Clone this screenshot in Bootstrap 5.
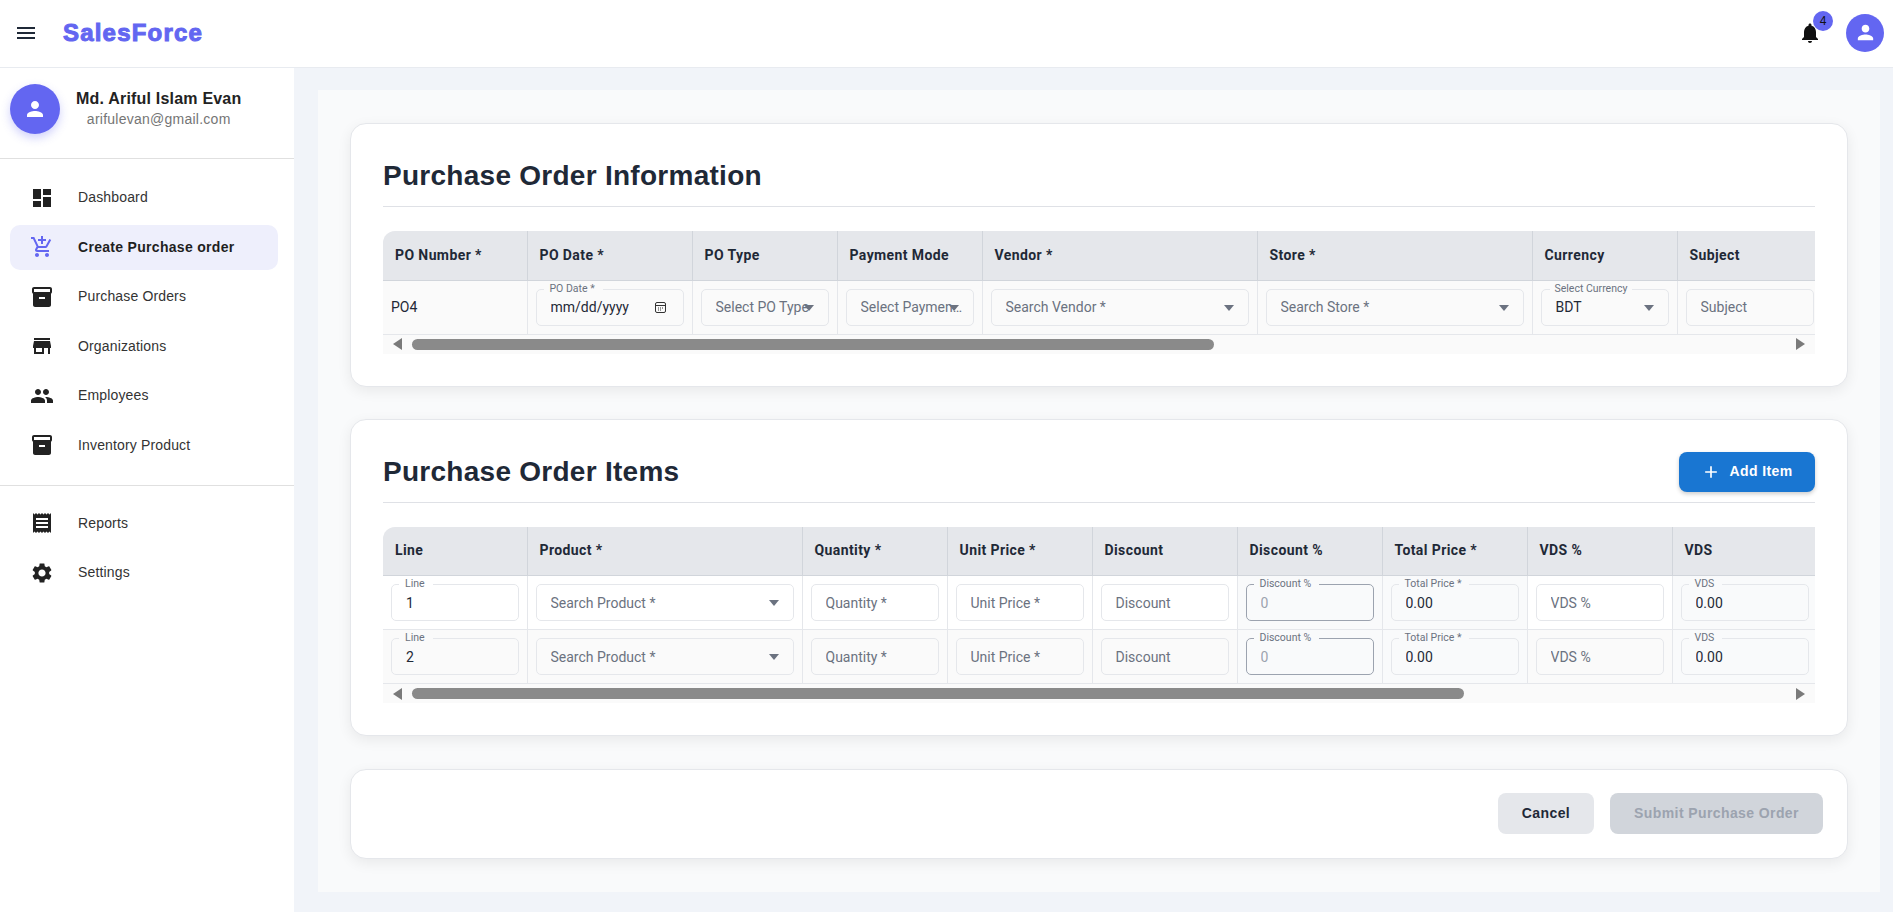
<!DOCTYPE html>
<html lang="en">
<head>
    <meta charset="UTF-8">
    <meta name="viewport" content="width=device-width, initial-scale=1.0">
    <title>SalesForce - Create Purchase Order</title>
    <link href="https://cdn.jsdelivr.net/npm/bootstrap@5.3.0/dist/css/bootstrap.min.css" rel="stylesheet">
    <style>
        html, body { height: 100%; }
        body { overflow: hidden; background: #f1f4f9; font-family: "Liberation Sans", Arial, sans-serif; color: #1f2937; }

        /* top bar */
        .topbar { height: 68px; padding: 0 9px 2px 14px; background: #fff; border-bottom: 1px solid #e8ebf0; }
        .brand-text { margin-left: 25px; padding: 0; font-size: 24px; font-weight: 700; letter-spacing: 1.2px; color: #6366f1; -webkit-text-stroke: 1px #6366f1; }
        .ico { display: block; flex: none; width: 24px; height: 24px; fill: currentColor; }
        .bell-wrap { width: 24px; height: 24px; color: #111; }
        .bell-count { top: -10px; left: 15px; width: 20px; height: 20px; padding: 0; font-size: 12px; line-height: 20px; font-weight: 400; background: #6366f1; color: #111; }
        .user-dot { width: 38px; height: 38px; margin-left: 24px; background: #6366f1; color: #fff; }
        .user-dot .ico { width: 23px; height: 23px; }

        /* sidebar */
        .app-body { height: 844px; }
        .side { width: 294px; flex: none; background: #fff; }
        .profile { height: 91px; padding: 16px 10px 0; border-bottom: 1px solid #e0e0e0; }
        .profile-pic { width: 50px; height: 50px; background: #6366f1; color: #fff; box-shadow: 0 4px 10px rgba(99, 102, 241, .3); }
        .profile-name { margin-top: 1px; font-size: 16px; line-height: 20px; font-weight: 700; letter-spacing: .2px; color: #222; }
        .profile-mail { font-size: 14px; line-height: 20px; letter-spacing: .25px; color: #757575; }
        .side-group { padding: 16px 16px 17px 10px; gap: 4.5px; }
        .side-group + .side-group { padding-top: 15px; border-top: 1px solid #e0e0e0; }
        .side-link { height: 45px; padding: 0 0 0 20px; border-radius: 10px; font-size: 14px; letter-spacing: .15px; color: #333; }
        .side-link:hover { color: #333; }
        .side-link .ico { margin-right: 24px; color: #222; }
        .side-link.active { background: #eeeffc; color: #1f1f1f; font-weight: 700; letter-spacing: .3px; }
        .side-link.active .ico { color: #6366f1; }

        /* content */
        .content-area { min-width: 0; padding: 22px 13px 20px 24px; }
        .panel { height: 802px; padding: 33px 32px 0; background: #f9fafb; }
        .box { margin-bottom: 32px; padding: 32px; background: #fff; border: 1px solid #e5e7eb; border-radius: 16px; box-shadow: 0 4px 14px rgba(0, 0, 0, .07); }
        .box-head { height: 51px; margin-bottom: 24px; padding-bottom: 10px; border-bottom: 1px solid #dfe1e6; }
        .box-title { margin: 0; font-size: 28px; font-weight: 700; letter-spacing: .27px; color: #1f2937; }
        .btn-add { width: 136px; height: 40px; padding: 0; border: 0; border-radius: 8px; background: #1976d2; color: #fff; font-size: 14px; font-weight: 700; letter-spacing: .4px; box-shadow: 0 2px 4px rgba(0, 0, 0, .2); }
        .btn-add:hover { background: #1976d2; color: #fff; }
        .btn-add .ico { width: 20px; height: 20px; margin-right: 8px; }
        .box-foot { height: 90px; margin: 33px 0 0; padding: 24px 24px 25px; }
        .btn-soft { height: 41px; padding: 0; border: 0; border-radius: 8px; font-size: 14px; font-weight: 700; letter-spacing: .4px; }
        .btn-cancel { width: 96px; margin-right: 16px; background: #e5e7eb; color: #1f2937; }
        .btn-cancel:hover { background: #e5e7eb; color: #1f2937; }
        .btn-submit:disabled { width: 213px; background: #d1d5db; color: #9ca3af; opacity: 1; }

        /* tables */
        .grid-clip { overflow: hidden; border-radius: 12px 0 0 0; background: #fafafa; }
        .grid { margin: 0; table-layout: fixed; border-collapse: collapse; font-family: Roboto, sans-serif; font-size: 14px; }
        .grid-po { width: 1439px; }
        .grid-items { width: 1434px; }
        .w-a { width: 144px; } .w-b { width: 165px; } .w-c { width: 145px; } .w-d { width: 275px; }
        .grid > :not(caption) > * > * { padding: 8px; vertical-align: middle; border-width: 0 1px 1px 0; border-style: solid; border-color: #e5e7eb; background: transparent; box-shadow: none; color: #1f2937; }
        .grid > thead > tr > th { height: 49px; padding: 0 12px; background: #e5e7eb; border-color: #d1d5db; font-weight: 700; font-size: 14px; letter-spacing: .4px; white-space: nowrap; }
        .grid > tbody > tr > td { height: 54px; }
        .row-plain { --cell: #fff; }
        .row-alt { --cell: #fafafa; }
        .grid > tbody > tr.row-plain > td { background: #fff; }
        .grid > tbody > tr.row-alt > td { background: #fafafa; }
        .grid > tbody > tr > td.cell-muted { background: #f9fafb; --cell: #f9fafb; }
        .fld { height: 37px; }
        .fld .form-control { height: 37px; padding: 0 10px 0 14px; border: 1px solid #e5e7eb; border-radius: 5px; background: transparent; box-shadow: none; font-size: 14px; color: #1f2937; text-overflow: ellipsis; }
        .fld .form-control::placeholder { color: #6b7280; opacity: 1; }
        .fld .form-control:disabled { background: #f9fafb; }
        .fld .field-strong { border-color: #9ca3af; }
        .fld .field-strong::placeholder { color: #9ca3af; }
        .fld-label { top: -6px; left: 8px; padding: 0 8px 0 6px; font-size: 10.5px; line-height: 12px; background: var(--cell); color: #6b7280; white-space: nowrap; }
        .fld-label-flat { left: 9px; padding: 0 5px; }
        .caret-mark { top: 16px; right: 15px; width: 10px; height: 6px; fill: #6b7280; }
        .date-mark { top: 12px; right: 17px; width: 13px; height: 13px; fill: none; stroke: #333; pointer-events: none; }
        .fld input[type="date"]::-webkit-calendar-picker-indicator { opacity: 0; }
        .fake-scroll { height: 19px; padding: 0 10px; gap: 10px; background: #fafafa; }
        .fake-arrow { width: 9px; height: 12px; fill: #7a7a7a; flex: none; }
        .fake-track { height: 11px; }
        .fake-thumb { height: 11px; border-radius: 6px; background: #8a8a8a; }
    </style>
</head>
<body>
    <nav class="navbar topbar flex-nowrap justify-content-start">
        <svg class="ico" viewBox="0 0 24 24"><path d="M3 18h18v-2H3v2zm0-5h18v-2H3v2zm0-7v2h18V6H3z"/></svg>
        <span class="navbar-brand brand-text">SalesForce</span>
        <div class="ms-auto d-flex align-items-center">
            <div class="bell-wrap position-relative">
                <svg class="ico" viewBox="0 0 24 24"><path d="M12 22c1.1 0 2-.9 2-2h-4c0 1.1.89 2 2 2zm6-6v-5c0-3.07-1.64-5.64-4.5-6.32V4c0-.83-.67-1.5-1.5-1.5s-1.5.67-1.5 1.5v.68C7.63 5.36 6 7.92 6 11v5l-2 2v1h16v-1l-2-2z"/></svg>
                <span class="badge rounded-circle position-absolute bell-count">4</span>
            </div>
            <div class="user-dot rounded-circle d-flex align-items-center justify-content-center">
                <svg class="ico" viewBox="0 0 24 24"><path d="M12 12c2.21 0 4-1.79 4-4s-1.79-4-4-4-4 1.79-4 4 1.79 4 4 4zm0 2c-2.67 0-8 1.34-8 4v2h16v-2c0-2.66-5.33-4-8-4z"/></svg>
            </div>
        </div>
    </nav>

    <div class="d-flex app-body">
        <aside class="side">
            <div class="profile d-flex align-items-start gap-3">
                <div class="profile-pic rounded-circle d-flex align-items-center justify-content-center flex-none">
                    <svg class="ico" viewBox="0 0 24 24"><path d="M12 12c2.21 0 4-1.79 4-4s-1.79-4-4-4-4 1.79-4 4 1.79 4 4 4zm0 2c-2.67 0-8 1.34-8 4v2h16v-2c0-2.66-5.33-4-8-4z"/></svg>
                </div>
                <div class="text-center pt-1">
                    <div class="profile-name">Md. Ariful Islam Evan</div>
                    <div class="profile-mail">arifulevan@gmail.com</div>
                </div>
            </div>
            <nav class="nav flex-column side-group">
                <a class="nav-link side-link d-flex align-items-center" href="#"><svg class="ico" viewBox="0 0 24 24"><path d="M3 13h8V3H3v10zm0 8h8v-6H3v6zm10 0h8V11h-8v10zm0-18v6h8V3h-8z"/></svg>Dashboard</a>
                <a class="nav-link side-link active d-flex align-items-center" href="#"><svg class="ico" viewBox="0 0 24 24"><path d="M11 9h2V6h3V4h-3V1h-2v3H8v2h3v3zm-4 9c-1.1 0-1.99.9-1.99 2S5.9 22 7 22s2-.9 2-2-.9-2-2-2zm10 0c-1.1 0-1.99.9-1.99 2s.89 2 1.99 2 2-.9 2-2-.9-2-2-2zm-9.83-3.25l.03-.12.9-1.63h7.45c.75 0 1.41-.41 1.75-1.03l3.86-7.01L19.42 4h-.01l-1.1 2-2.76 5H8.53l-.13-.27L6.16 6l-.95-2-.94-2H1v2h2l3.6 7.59-1.35 2.45c-.16.28-.25.61-.25.96 0 1.1.9 2 2 2h12v-2H7.42c-.13 0-.25-.11-.25-.25z"/></svg>Create Purchase order</a>
                <a class="nav-link side-link d-flex align-items-center" href="#"><svg class="ico" viewBox="0 0 24 24"><path d="M20 2H4c-1 0-2 .9-2 2v3.01c0 .72.43 1.34 1 1.69V20c0 1.1 1.1 2 2 2h14c.9 0 2-.9 2-2V8.7c.57-.35 1-.97 1-1.69V4c0-1.1-1-2-2-2zm-5 12H9v-2h6v2zm5-7H4V4l16-.02V7z"/></svg>Purchase Orders</a>
                <a class="nav-link side-link d-flex align-items-center" href="#"><svg class="ico" viewBox="0 0 24 24"><path d="M20 4H4v2h16V4zm1 10v-2l-1-5H4l-1 5v2h1v6h10v-6h4v6h2v-6h1zm-9 4H6v-4h6v4z"/></svg>Organizations</a>
                <a class="nav-link side-link d-flex align-items-center" href="#"><svg class="ico" viewBox="0 0 24 24"><path d="M16 11c1.66 0 2.99-1.34 2.99-3S17.66 5 16 5c-1.66 0-3 1.34-3 3s1.34 3 3 3zm-8 0c1.66 0 2.99-1.34 2.99-3S9.66 5 8 5C6.34 5 5 6.34 5 8s1.34 3 3 3zm0 2c-2.33 0-7 1.17-7 3.5V19h14v-2.5c0-2.33-4.67-3.5-7-3.5zm8 0c-.29 0-.62.02-.97.05 1.16.84 1.97 1.97 1.97 3.45V19h6v-2.5c0-2.33-4.67-3.5-7-3.5z"/></svg>Employees</a>
                <a class="nav-link side-link d-flex align-items-center" href="#"><svg class="ico" viewBox="0 0 24 24"><path d="M20 2H4c-1 0-2 .9-2 2v3.01c0 .72.43 1.34 1 1.69V20c0 1.1 1.1 2 2 2h14c.9 0 2-.9 2-2V8.7c.57-.35 1-.97 1-1.69V4c0-1.1-1-2-2-2zm-5 12H9v-2h6v2zm5-7H4V4l16-.02V7z"/></svg>Inventory Product</a>
            </nav>
            <nav class="nav flex-column side-group">
                <a class="nav-link side-link d-flex align-items-center" href="#"><svg class="ico" viewBox="0 0 24 24"><path d="M18 17H6v-2h12v2zm0-4H6v-2h12v2zm0-4H6V7h12v2zM3 22l1.5-1.5L6 22l1.5-1.5L9 22l1.5-1.5L12 22l1.5-1.5L15 22l1.5-1.5L18 22l1.5-1.5L21 22V2l-1.5 1.5L18 2l-1.5 1.5L15 2l-1.5 1.5L12 2l-1.5 1.5L9 2 7.5 3.5 6 2 4.5 3.5 3 2v20z"/></svg>Reports</a>
                <a class="nav-link side-link d-flex align-items-center" href="#"><svg class="ico" viewBox="0 0 24 24"><path d="M19.14 12.94c.04-.3.06-.61.06-.94 0-.32-.02-.64-.07-.94l2.03-1.58c.18-.14.23-.41.12-.61l-1.92-3.32c-.12-.22-.37-.29-.59-.22l-2.39.96c-.5-.38-1.03-.7-1.62-.94l-.36-2.54c-.04-.24-.24-.41-.48-.41h-3.84c-.24 0-.43.17-.47.41l-.36 2.54c-.59.24-1.13.57-1.62.94l-2.39-.96c-.22-.08-.47 0-.59.22L2.74 8.87c-.12.21-.08.47.12.61l2.03 1.58c-.05.3-.09.63-.09.94s.02.64.07.94l-2.03 1.58c-.18.14-.23.41-.12.61l1.92 3.32c.12.22.37.29.59.22l2.39-.96c.5.38 1.03.7 1.62.94l.36 2.54c.05.24.24.41.48.41h3.84c.24 0 .44-.17.47-.41l.36-2.54c.59-.24 1.13-.56 1.62-.94l2.39.96c.22.08.47 0 .59-.22l1.92-3.32c.12-.22.07-.47-.12-.61l-2.01-1.58zM12 15.6c-1.98 0-3.6-1.62-3.6-3.6s1.62-3.6 3.6-3.6 3.6 1.62 3.6 3.6-1.62 3.6-3.6 3.6z"/></svg>Settings</a>
            </nav>
        </aside>

        <main class="content-area flex-grow-1">
            <div class="panel">
                <section class="box">
                    <div class="box-head d-flex align-items-center justify-content-between">
                        <h2 class="box-title">Purchase Order Information</h2>
                    </div>
                    <div class="grid-clip">
                        <table class="table grid grid-po">
                            <colgroup><col class="w-a"><col class="w-b"><col class="w-c"><col class="w-c"><col class="w-d"><col class="w-d"><col class="w-c"><col class="w-c"></colgroup>
                            <thead>
                                <tr><th>PO Number *</th><th>PO Date *</th><th>PO Type</th><th>Payment Mode</th><th>Vendor *</th><th>Store *</th><th>Currency</th><th>Subject</th></tr>
                            </thead>
                            <tbody>
                                <tr class="row-alt">
                                    <td>PO4</td>
                                    <td><div class="fld position-relative"><input type="date" class="form-control"><span class="fld-label position-absolute">PO Date *</span><svg class="date-mark position-absolute" viewBox="0 0 13 13"><rect x="1.5" y="1.5" width="10" height="10" rx="1.5"/><path d="M1.5 4.5h10"/><path d="M4 7h1M6 7h1M8 7h1M4 9h1M6 9h1" stroke-width="1"/></svg></div></td>
                                    <td><div class="fld position-relative"><input class="form-control" placeholder="Select PO Type"><svg class="caret-mark position-absolute" viewBox="0 0 10 6"><path d="M0 0h10L5 6z"/></svg></div></td>
                                    <td><div class="fld position-relative"><input class="form-control" placeholder="Select Payment Mode"><svg class="caret-mark position-absolute" viewBox="0 0 10 6"><path d="M0 0h10L5 6z"/></svg></div></td>
                                    <td><div class="fld position-relative"><input class="form-control" placeholder="Search Vendor *"><svg class="caret-mark position-absolute" viewBox="0 0 10 6"><path d="M0 0h10L5 6z"/></svg></div></td>
                                    <td><div class="fld position-relative"><input class="form-control" placeholder="Search Store *"><svg class="caret-mark position-absolute" viewBox="0 0 10 6"><path d="M0 0h10L5 6z"/></svg></div></td>
                                    <td><div class="fld position-relative"><input class="form-control" value="BDT"><span class="fld-label fld-label-flat position-absolute">Select Currency</span><svg class="caret-mark position-absolute" viewBox="0 0 10 6"><path d="M0 0h10L5 6z"/></svg></div></td>
                                    <td><div class="fld"><input class="form-control" placeholder="Subject"></div></td>
                                </tr>
                            </tbody>
                        </table>
                    </div>
                    <div class="fake-scroll d-flex align-items-center">
                        <svg class="fake-arrow" viewBox="0 0 9 12"><path d="M9 0v12L0 6z"/></svg>
                        <div class="fake-track flex-grow-1"><div class="fake-thumb" style="width: 58.4%"></div></div>
                        <svg class="fake-arrow" viewBox="0 0 9 12"><path d="M0 0v12l9-6z"/></svg>
                    </div>
                </section>

                <section class="box">
                    <div class="box-head d-flex align-items-center justify-content-between">
                        <h2 class="box-title">Purchase Order Items</h2>
                        <button type="button" class="btn btn-add d-inline-flex align-items-center justify-content-center">
                            <svg class="ico" viewBox="0 0 24 24"><path d="M19 13h-6v6h-2v-6H5v-2h6V5h2v6h6v2z"/></svg>Add Item
                        </button>
                    </div>
                    <div class="grid-clip">
                        <table class="table grid grid-items">
                            <colgroup><col class="w-a"><col class="w-d"><col class="w-c"><col class="w-c"><col class="w-c"><col class="w-c"><col class="w-c"><col class="w-c"><col class="w-c"></colgroup>
                            <thead>
                                <tr><th>Line</th><th>Product *</th><th>Quantity *</th><th>Unit Price *</th><th>Discount</th><th>Discount %</th><th>Total Price *</th><th>VDS %</th><th>VDS</th></tr>
                            </thead>
                            <tbody id="item-rows"></tbody>
                        </table>
                    </div>
                    <div class="fake-scroll d-flex align-items-center">
                        <svg class="fake-arrow" viewBox="0 0 9 12"><path d="M9 0v12L0 6z"/></svg>
                        <div class="fake-track flex-grow-1"><div class="fake-thumb" style="width: 76.6%"></div></div>
                        <svg class="fake-arrow" viewBox="0 0 9 12"><path d="M0 0v12l9-6z"/></svg>
                    </div>
                </section>

                <section class="box box-foot d-flex align-items-center justify-content-end">
                    <button type="button" class="btn btn-soft btn-cancel">Cancel</button>
                    <button type="button" class="btn btn-soft btn-submit" disabled>Submit Purchase Order</button>
                </section>
            </div>
        </main>
    </div>

    <script>
        const caret = '<svg class="caret-mark position-absolute" viewBox="0 0 10 6"><path d="M0 0h10L5 6z"/></svg>';
        const field = (label, value) => `<td><div class="fld position-relative"><input class="form-control" value="${value}"><span class="fld-label position-absolute">${label}</span></div></td>`;
        const empty = (text) => `<td><div class="fld"><input class="form-control" placeholder="${text}"></div></td>`;

        // two item lines, only the line number differs
        document.getElementById('item-rows').innerHTML = [1, 2].map((line) => `
            <tr class="${line === 1 ? 'row-plain' : 'row-alt'}">
                ${field('Line', line)}
                <td><div class="fld position-relative"><input class="form-control" placeholder="Search Product *">${caret}</div></td>
                ${empty('Quantity *')}
                ${empty('Unit Price *')}
                ${empty('Discount')}
                <td class="cell-muted"><div class="fld position-relative"><input class="form-control field-strong" placeholder="0" disabled><span class="fld-label position-absolute">Discount %</span></div></td>
                <td class="cell-muted"><div class="fld position-relative"><input class="form-control" value="0.00" disabled><span class="fld-label position-absolute">Total Price *</span></div></td>
                ${empty('VDS %')}
                <td class="cell-muted"><div class="fld position-relative"><input class="form-control" value="0.00" disabled><span class="fld-label position-absolute">VDS</span></div></td>
            </tr>`).join('');
    </script>
    <script src="https://cdn.jsdelivr.net/npm/bootstrap@5.3.0/dist/js/bootstrap.bundle.min.js"></script>
</body>
</html>
